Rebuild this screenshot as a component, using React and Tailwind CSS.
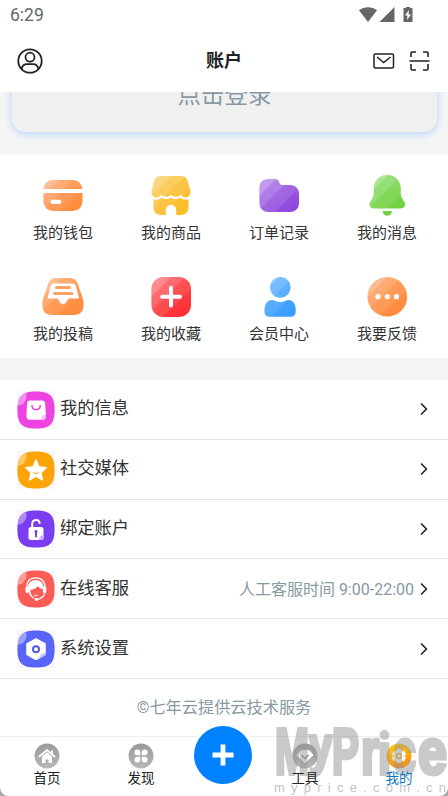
import { useId } from 'react';
import { ChevronRight } from 'lucide-react';

// soft diagonal highlights shared by all the grid icons
function Shine() {
  return (
    <g fill="#fff">
      <path d="M0 0H24L0 24Z" opacity=".2" />
      <path d="M0 0H38L0 38Z" opacity=".13" />
      <path d="M0 0H44V12L12 44H0Z" opacity=".09" />
    </g>
  );
}

function GridIcon({ from, to, shape, children }) {
  const id = useId();
  return (
    <svg viewBox="0 0 44 44" className="w-11 h-11">
      <defs>
        <linearGradient id={`${id}g`} x1="0" y1="0" x2=".6" y2="1">
          <stop stopColor={from} />
          <stop offset="1" stopColor={to} />
        </linearGradient>
        <clipPath id={`${id}c`}>{shape}</clipPath>
      </defs>
      <g clipPath={`url(#${id}c)`}>
        <rect width="44" height="44" fill={`url(#${id}g)`} />
        <Shine />
      </g>
      {children}
    </svg>
  );
}

const services = [
  {
    label: '我的钱包',
    icon: (
      <GridIcon from="#ff9c5c" to="#ff8c3c" shape={<rect x="2.5" y="6" width="39" height="31" rx="9.5" />}>
        <path d="M2 15h40v4H2z" fill="#fff" />
        <rect x="9.5" y="25.7" width="11" height="4.2" rx="2.1" fill="#fff" />
      </GridIcon>
    ),
  },
  {
    label: '我的商品',
    icon: (
      <GridIcon
        from="#fcc23f"
        to="#fcbd28"
        shape={
          <>
            <path d="M13 2h18c5 0 7 2 8 6l2.2 8c.9 4-1 7.4-4.2 7.4-2.500 0-4-1-5-3-1.500 3-8.500 3-10 0-1.500 3-8.500 3-10 0-1 2-2.500 3-5 3-3.200 0-5.100-3.400-4.200-7.400L5 8c1-4 3-6 8-6z" />
            <path d="M4.500 25.500c3.500.8 6.300-.2 8-2 2.300 2 7 2 9.500 0 2.500 2 7.200 2 9.500 0 1.700 1.800 4.500 2.800 8 2V33c0 5-3 8-8 8h-4.300v-5c0-3-2.200-5-5.200-5s-5.200 2-5.200 5v5h-4.300c-5 0-8-3-8-8z" />
          </>
        }
      />
    ),
  },
  {
    label: '订单记录',
    icon: (
      <GridIcon
        from="#a66fe6"
        to="#8f45dc"
        shape={<path d="M11.500 5h6c3 0 4 1.500 5 4 .5 1.500 1.500 2 3 2H33c5.500 0 9 3.500 9 9v9c0 5.500-3.500 9-9 9H11.500c-5.500 0-9-3.500-9-9V14c0-5.500 3.500-9 9-9z" />}
      />
    ),
  },
  {
    label: '我的消息',
    icon: (
      <GridIcon
        from="#7fdb61"
        to="#70d03b"
        shape={
          <>
            <path d="M22.300 1C30 1 35.800 7 35.800 14.500V20c0 2 .6 3.300 1.700 5l2 3.200c1.800 3-.2 6.200-3.500 6.200H8.500c-3.300 0-5.300-3.200-3.500-6.200L7 25c1.100-1.700 1.700-3 1.700-5v-5.500C8.700 7 14.600 1 22.300 1z" />
            <path d="M17.500 37h9.500c-.3 3-2.200 4.800-4.700 4.800S17.800 40 17.500 37z" />
          </>
        }
      />
    ),
  },
  {
    label: '我的投稿',
    icon: (
      <GridIcon
        from="#ff9c58"
        to="#ff8c3e"
        shape={<path d="M16 3h12c5 0 7.500 2 9 6.500l4.500 13c.7 2 1 3.500 1 5.500v2.500c0 6-3.500 9.500-9.500 9.500H11c-6 0-9.500-3.500-9.500-9.500V28c0-2 .3-3.500 1-5.500L7 9.500C8.500 5 11 3 16 3z" />}
      >
        <path d="M12.500 8.500h19c1.700 0 2.600.7 3.200 2.300l3.500 12.700H27.500l-2.700 4.300c-1.200 1.800-4.400 1.800-5.600 0l-2.700-4.300H6.500L9.500 11c.5-1.700 1.300-2.500 3-2.500z" fill="#fff" />
        <path d="M15.500 12.500h13M13.500 18.500h17.500" stroke="#fca064" strokeWidth="3" strokeLinecap="round" />
      </GridIcon>
    ),
  },
  {
    label: '我的收藏',
    icon: (
      <GridIcon from="#fb5254" to="#ff3035" shape={<rect x="2.500" y="2" width="39.500" height="40" rx="12" />}>
        <path d="M22 12.800v17.800M13.200 21.700h17.800" stroke="#fff" strokeWidth="4" strokeLinecap="round" />
      </GridIcon>
    ),
  },
  {
    label: '会员中心',
    icon: (
      <GridIcon
        from="#62b2ff"
        to="#3a9dff"
        shape={
          <>
            <circle cx="23.300" cy="12.300" r="10.400" />
            <path d="M15 25c2 0 4.500 2.200 8.200 2.200S29.500 25 31.500 25c4.500 0 7.200 4 7.200 10v2c0 3-2 4.700-5 4.700H12.500c-3 0-5-1.700-5-4.700v-2c0-6 3-10 7.500-10z" />
          </>
        }
      />
    ),
  },
  {
    label: '我要反馈',
    icon: (
      <GridIcon from="#ff9c58" to="#ff8a3d" shape={<circle cx="22.300" cy="21.800" r="19.800" />}>
        <g fill="#fff">
          <circle cx="13" cy="21.700" r="2.600" />
          <circle cx="22.300" cy="21.700" r="2.600" />
          <circle cx="31.500" cy="21.700" r="2.600" />
        </g>
      </GridIcon>
    ),
  },
];

function MenuIcon({ color, children }) {
  const id = useId();
  return (
    <svg viewBox="0 0 38 38" className="w-[38px] h-[38px] mt-[1px] bg-[#f9f7f9]">
      <clipPath id={id}>
        <path d="M19 .4C33 .4 37.600 5 37.600 19S33 37.600 19 37.600.4 33 .4 19 5 .4 19 .4z" />
      </clipPath>
      <g clipPath={`url(#${id})`}>
        <rect width="38" height="38" fill={color} />
        <circle cx="0" cy="5.500" r="9.500" fill="#fff" opacity=".4" />
      </g>
      {children}
    </svg>
  );
}

const menu = [
  {
    label: '我的信息',
    icon: (
      <MenuIcon color="#ed43e0">
        <path d="M13 9.500h12c2 0 3 1 3.100 3L29 25c.1 2.300-1.100 3.700-3.400 3.700H12.800c-2.300 0-3.500-1.400-3.400-3.700l.7-12.500c.1-2 1-3 2.900-3z" fill="#fff" />
        <path d="M24 28.700c0-3 2-5 5-5.500v2c0 2.200-1.200 3.500-3.400 3.500z" fill="#f8bdf4" />
        <path d="M15 14.500c.3 5.500 8 5.500 8.300 0" fill="none" stroke="#ed43e0" strokeWidth="1.500" strokeLinecap="round" />
      </MenuIcon>
    ),
  },
  {
    label: '社交媒体',
    icon: (
      <MenuIcon color="#ffa408">
        <path d="M19 9l3 7 7.200.7-5.400 5 1.700 7.200L19 25.200l-6.500 3.700 1.700-7.200-5.400-5L16 16z" fill="#fff" stroke="#fff" strokeWidth="1.500" strokeLinejoin="round" />
        <path d="M17 21.500c1 1.500 3 1.500 4 0" fill="none" stroke="#ffa408" strokeWidth="1.200" strokeLinecap="round" />
      </MenuIcon>
    ),
  },
  {
    label: '绑定账户',
    icon: (
      <MenuIcon color="#7b3df1">
        <path d="M15.200 18v-4c0-5 6.800-5.500 7.500-1" fill="none" stroke="#fff" strokeWidth="2" strokeLinecap="round" />
        <rect x="11.500" y="17" width="15" height="13" rx="2.500" fill="#fff" />
        <path d="M22 30c0-3 1.500-4.500 4.500-5v2.500c0 1.500-1 2.500-2.500 2.500z" fill="#cbb3fa" />
        <circle cx="19" cy="21.500" r="1.500" fill="#7b3df1" />
        <path d="M19 22v4.500" stroke="#7b3df1" strokeWidth="2" strokeLinecap="round" />
      </MenuIcon>
    ),
  },
  {
    label: '在线客服',
    note: '人工客服时间 9:00-22:00',
    icon: (
      <MenuIcon color="#fc5c55">
        <path d="M10 20C9 11 13 7.800 18.500 7.800S28 11 28 18" fill="none" stroke="#fff" strokeWidth="1.300" />
        <path d="M11.300 21c-1.500-7 2-11 7.200-11s8.500 3.500 8 9c-2.500.2-4.500-1-5.500-3-2 2.500-4.300 3.700-7.800 4 .2 4 2.500 7.500 5.800 9-4-.5-6.700-3.500-7.700-8z" fill="#fff" />
        <rect x="8.500" y="16.500" width="3.300" height="6.500" rx="1.600" fill="#fff" />
        <rect x="26" y="16.500" width="3.300" height="6.500" rx="1.600" fill="#fff" />
        <path d="M28 21c0 4-2.500 7-7.500 8.500" fill="none" stroke="#fff" strokeWidth="1.300" />
        <circle cx="19.500" cy="29.300" r="1.600" fill="#fff" />
        <path d="M17 25c1.300 1 3 1 4.200 0" fill="none" stroke="#fff" strokeWidth="1" />
      </MenuIcon>
    ),
  },
  {
    label: '系统设置',
    icon: (
      <MenuIcon color="#5865f8">
        <path d="M19 9.700l8.300 4.700v9.500L19 28.600l-8.300-4.700v-9.500z" fill="#fff" stroke="#fff" strokeWidth="3" strokeLinejoin="round" />
        <path d="M22 28.600c.5-3.500 2.500-5.500 6.500-6v2l-7 5z" fill="#c4c8fd" />
        <circle cx="19" cy="19.200" r="3" fill="none" stroke="#4f5ce0" strokeWidth="2" />
      </MenuIcon>
    ),
  },
];

function TabIcon({ active, children }) {
  return (
    <svg viewBox="0 0 26 26" className="w-[26px] h-[26px]">
      <defs>
        <linearGradient id="tabGray" x1="0" y1="0" x2="0" y2="1">
          <stop stopColor="#999" />
          <stop offset="1" stopColor="#b8b8b8" />
        </linearGradient>
        <linearGradient id="tabGold" x1="0" y1="0" x2=".3" y2="1">
          <stop stopColor="#ffd000" />
          <stop offset="1" stopColor="#ff9010" />
        </linearGradient>
      </defs>
      <circle cx="13" cy="13" r="12.500" fill={active ? 'url(#tabGold)' : 'url(#tabGray)'} />
      {children}
    </svg>
  );
}

function Tab({ label, active, children }) {
  return (
    <div className="w-[94px] shrink-0 flex flex-col items-center pt-[6px]">
      <TabIcon active={active}>{children}</TabIcon>
      <span className={`relative z-10 text-[13.5px] leading-[18px] ${active ? 'text-[#1177c5]' : 'text-[#222]'}`}>{label}</span>
    </div>
  );
}

function StatusBar() {
  return (
    <div className="h-[31px] flex items-center justify-between pl-[10px] pr-[35px] text-[#666]">
      <span className="text-[17.5px] leading-none">6:29</span>
      <svg viewBox="0 0 54 16" className="w-[54px] h-4 -mt-px" fill="#666">
        <path d="M0 3.300C5-.8 13-.8 18 3.300L9 15z" />
        <path d="M35.500 0v15H20.500z" />
        <path d="M47-.5h4V1h2.500v14h-9V1H47z" />
        <path d="M50 3l-4 5.500h2.500L48 13l4-5.500h-2.500z" fill="#fff" />
      </svg>
    </div>
  );
}

function Header() {
  return (
    <header className="h-[61px] px-[17px] pb-[2px] flex items-center justify-between text-[#222]">
      <svg viewBox="0 0 26 26" className="w-[65px] h-[26px]" preserveAspectRatio="xMinYMid" fill="none" stroke="currentColor" strokeWidth="1.800">
        <circle cx="13" cy="13" r="11.700" />
        <circle cx="13" cy="9.200" r="4.500" />
        <path d="M4.500 21c.8-3.200 2.500-4.800 5.500-4.800h6c3 0 4.700 1.600 5.500 4.800" />
      </svg>
      <h1 className="text-[18px] font-bold">账户</h1>
      <div className="w-[65px] flex items-center justify-end gap-[14px]">
        <svg viewBox="0 0 22 18" className="w-[22px] h-[18px]" fill="none" stroke="currentColor" strokeWidth="1.500">
          <rect x="1" y="2" width="19.500" height="14" rx="1.500" />
          <path d="M4 5l6.700 5.500L17.500 5" />
        </svg>
        <svg viewBox="0 0 22 22" className="w-[22px] h-[22px]" fill="none" stroke="currentColor" strokeWidth="1.600">
          <path d="M2 7V3.200Q2 2 3.200 2H7M14 2h3.800Q19 2 19 3.200V7M2 14v4.800Q2 20 3.200 20H7M14 20h3.800Q19 20 19 18.800V14M.500 11h20" />
        </svg>
      </div>
    </header>
  );
}

const markLetters = [
  { ch: 'M', x: 2, w: 34 },
  { ch: 'P', x: 59, w: 27 },
  { ch: 'r', x: 88, w: 18 },
  { ch: 'c', x: 120, w: 23 },
  { ch: 'e', x: 145, w: 29 },
];

// translucent stamp over the bottom right corner
function Watermark() {
  return (
    <svg viewBox="0 0 175 70" className="absolute right-0 bottom-0 w-[175px] h-[70px] pointer-events-none">
      <g opacity=".52" fill="#999" stroke="#999" strokeWidth="4" fontFamily="'Liberation Sans', sans-serif" fontWeight="700">
        {markLetters.map((l) => (
          <text key={l.ch} x={l.x} y="48" fontSize="64" textLength={l.w} lengthAdjust="spacingAndGlyphs">{l.ch}</text>
        ))}
        <text x="36" y="38" fontSize="54" textLength="23" lengthAdjust="spacingAndGlyphs">y</text>
        <text x="105" y="48" fontSize="58" textLength="13" lengthAdjust="spacingAndGlyphs">ı</text>
        <circle cx="111.500" cy="9" r="3" />
      </g>
      <text x="1" y="66" fontSize="13" fill="#c4c4c4" textLength="172" fontFamily="'Liberation Sans', sans-serif">myprice.com.cn</text>
    </svg>
  );
}

export default function App() {
  return (
    <div className="relative w-[448px] h-[796px] overflow-hidden bg-white flex flex-col text-[#333] font-[Roboto,'Noto_Sans_CJK_SC',sans-serif]">
      <StatusBar />
      <Header />

      <section className="h-[63px] shrink-0 overflow-hidden bg-[#f5f5f5] flex items-end pl-3 pr-[11px] pb-[23px]">
        <div className="w-full h-[100px] shrink-0 rounded-[14px] bg-[#f0f0f0] shadow-[0_2px_6px_2px_#ccdff9] flex items-end justify-center pb-[21px]">
          <span className="text-[23.5px] leading-[32px] text-[#8799a3]">点击登录</span>
        </div>
      </section>

      <section className="h-[203px] shrink-0 pl-[9px] pr-[7px] pt-[19px] grid grid-cols-4 content-start">
        {services.map((s) => (
          <div key={s.label} className="h-[101px] flex flex-col items-center">
            {s.icon}
            <span className="mt-[4px] text-[15px] leading-[22px]">{s.label}</span>
          </div>
        ))}
      </section>

      <div className="h-[22px] shrink-0 bg-[#f5f5f5]" />

      <section className="shrink-0">
        {menu.map((m) => (
          <div key={m.label} className="h-[59.800px] flex items-center pl-[17px] pr-[14px] border-b border-[#e6e6e6]">
            {m.icon}
            <span className="ml-[5px] text-[17.300px]">{m.label}</span>
            <span className="ml-auto mt-[2px] text-[16px] text-[#8799a3]">{m.note}</span>
            <ChevronRight className="w-[20px] h-[20px] text-[#222]" strokeWidth={2} />
          </div>
        ))}
      </section>

      <footer className="flex-1 pt-px flex items-center justify-center text-[16.200px] text-[#8799a3]">
        ©七年云提供云技术服务
      </footer>

      <nav className="h-[60px] shrink-0 bg-white border-t border-[#eee] flex">
        <Tab label="首页">
          <path d="M5.500 13.500L13 7l7.500 6.500" fill="none" stroke="#fff" strokeWidth="1.800" strokeLinecap="round" strokeLinejoin="round" />
          <path d="M17 7.500h2v4l-2-1.500zM8 13.500l5-4.300 5 4.300V20h-3.500v-3.500h-3V20H8z" fill="#fff" />
        </Tab>
        <Tab label="发现">
          <g fill="#fff">
            <path d="M9.300 6.500a3 3 0 0 1 3 3v2.800h-3a2.900 2.900 0 0 1 0-5.800z" />
            <path d="M16.700 6.500a2.900 2.900 0 0 1 0 5.800h-3V9.500a3 3 0 0 1 3-3z" />
            <path d="M9.300 13.700h3v2.800a3 3 0 0 1-3 3 2.900 2.900 0 0 1 0-5.800z" />
            <path d="M13.700 13.700h3a2.900 2.900 0 0 1 0 5.800 3 3 0 0 1-3-3z" />
          </g>
        </Tab>
        <div className="w-[70px] shrink-0 flex justify-center">
          <div className="-mt-[11px] w-[58px] h-[58px] shrink-0 rounded-full bg-[#0081ff] ring-4 ring-white flex items-center justify-center">
            <svg viewBox="0 0 22 22" className="w-[22px] h-[22px]">
              <path d="M11 .5v21M.500 11h21" stroke="#fff" strokeWidth="4.800" />
            </svg>
          </div>
        </div>
        <Tab label="工具">
          <path d="M9 7.500h8l4 4.500-8 8-8-8z" fill="#fff" stroke="#fff" strokeLinejoin="round" />
          <path d="M9.500 12l3.500 3.500 3.500-3.500" fill="none" stroke="#888" strokeWidth="1.500" />
        </Tab>
        <Tab label="我的" active>
          <g fill="#fff">
            <circle cx="13" cy="13" r="5.800" />
            <path d="M10.800 6h4.400v14h-4.400z" />
            <path d="M10.800 6h4.400v14h-4.400z" transform="rotate(60 13 13)" />
            <path d="M10.800 6h4.400v14h-4.400z" transform="rotate(120 13 13)" />
          </g>
          <circle cx="13" cy="13" r="2.500" fill="#fff" stroke="#f5b020" strokeWidth="1.500" />
        </Tab>
      </nav>

      <Watermark />
      {/* rounded corners of the device screen */}
      <svg viewBox="0 0 8 8" className="absolute left-0 bottom-0 w-2 h-2"><path d="M0 0Q1 7 8 8H0z" fill="#aaa" /></svg>
      <svg viewBox="0 0 8 8" className="absolute right-0 bottom-0 w-2 h-2"><path d="M8 0Q7 7 0 8H8z" fill="#aaa" /></svg>
    </div>
  );
}
